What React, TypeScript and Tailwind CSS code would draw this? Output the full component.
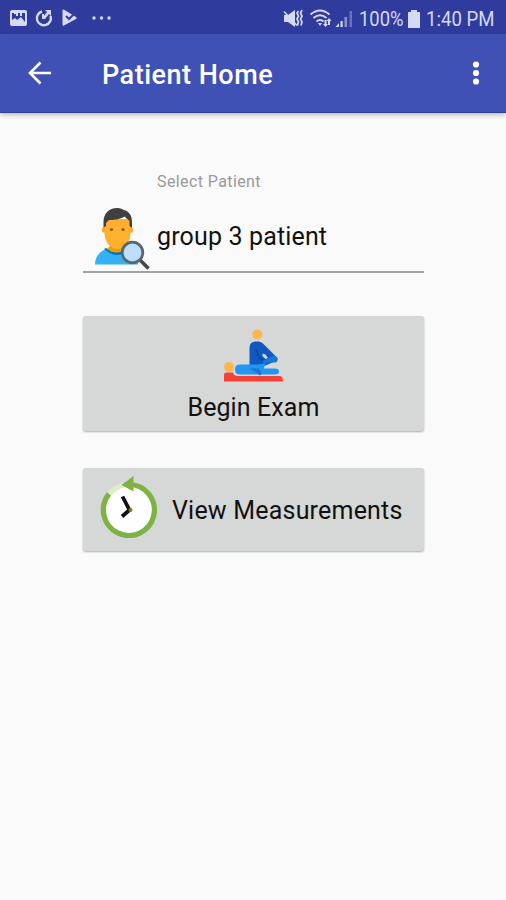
const StatusIcons = () => {
  return (
    <svg className="w-[112px] h-[34px]" viewBox="0 0 112 34" fill="#d5daf5">
      <path
        fillRule="evenodd"
        d="M12 10h13q2 0 2 2v12q0 2-2 2H12q-2 0-2-2V12q0-2 2-2zM12 13v7l3-2 2 2 4-3 4 5v-9h-3v3h-2v-3h-2v3h-2v-2h-2v-1z"
      />
      <path
        d="M42 11.5A7 7 0 1 0 50.5 16"
        fill="none"
        stroke="#d5daf5"
        strokeWidth="2.4"
      />
      <path d="M45 10h6v6l-2-2-4 5h-3v-5h2v2l3-4z" />
      <path d="M62.500 10.500q0-1.500 1.500-.8L76 17q1.500 1 0 2l-12 6.500q-1.500.7-1.500-.8z" />
      <path
        d="M66 16l3 3 6-6"
        fill="none"
        stroke="#303f9f"
        strokeWidth="2"
      />
      <circle cx="94" cy="18" r="1.700" />
      <circle cx="101.500" cy="18" r="1.700" />
      <circle cx="109" cy="18" r="1.700" />
    </svg>
  );
};

const SignalIcons = () => {
  return (
    <svg className="w-[72px] h-[34px]" viewBox="282 0 72 34" fill="#d5daf5">
      <path d="M284 15h4l7-5v17l-7-5h-4z" />
      <path
        d="M284 11.500l13 14"
        fill="none"
        stroke="#d5daf5"
        strokeWidth="1.600"
      />
      <path
        d="M298.500 11l-1.500 2 1.500 3-1.500 3 1.500 3-1 3.500M302 10l-1.500 3 1.500 3-1.500 3 1.500 3-1 3.500"
        fill="none"
        stroke="#d5daf5"
        strokeWidth="1.700"
      />
      <g fill="none" stroke="#d5daf5" strokeWidth="1.900">
        <path d="M310.500 14.500q9.500-8 19 0" />
        <path d="M313.500 18q6.500-5.500 13 0" />
        <path d="M316.500 21.500q3.500-3 7 0" />
      </g>
      <path d="M318 23h4l-2 3zM324.500 20h2v4h1.500l-2.500 3-2.500-3h1.500zM329 18l2.500 3H330v4h-2v-4h-1.500z" />
      <path d="M335.500 27l3.500-4v4z" />
      <path d="M340.500 21h2.200v6h-2.200z" />
      <path d="M344.500 17h2.500v10h-2.500z" opacity=".55" />
      <path d="M349.500 11h2.500v16h-2.500z" opacity=".35" />
    </svg>
  );
};

const StatusBar = () => {
  return (
    <div className="h-[34px] bg-[#303c9d] flex items-center justify-between text-[#d5daf5] text-[20px] leading-[34px] whitespace-nowrap">
      <StatusIcons />
      <div className="flex items-center pt-[3px] pr-[11px]">
        <div className="-mt-[3px] mr-[5px]">
          <SignalIcons />
        </div>
        <span className="w-[45px] origin-left scale-x-[.92]">100%</span>
        <svg
          className="w-[12px] h-[18px] ml-[4px] mr-[6px]"
          viewBox="0 0 12 18"
          fill="#d5daf5"
        >
          <path d="M3 0h6v2h3v16H0V2h3z" />
        </svg>
        <span className="w-[69px] origin-left scale-x-[.93]">1:40 PM</span>
      </div>
    </div>
  );
};

const Toolbar = () => {
  return (
    <header className="h-[79px] bg-[#3f51b5] border-b border-[#2f3f9c] shadow-[0_2px_5px_rgba(0,0,0,0.25)] flex items-center text-white">
      <button className="ml-[28px]" aria-label="Back">
        <svg
          className="w-[24px] h-[24px]"
          viewBox="0 0 24 24"
          fill="none"
          stroke="white"
          strokeWidth="2.600"
        >
          <path d="M23 12H3M12.500 1.500L2 12l10.500 10.500" />
        </svg>
      </button>
      <h1 className="ml-[50px] pt-[5px] text-[27px] font-medium tracking-[.5px] whitespace-nowrap">
        Patient Home
      </h1>
      <button className="ml-auto mr-[26px]" aria-label="More">
        <svg className="w-[8px] h-[26px]" viewBox="0 0 8 26" fill="white">
          <circle cx="4" cy="4.500" r="3.100" />
          <circle cx="4" cy="13" r="3.100" />
          <circle cx="4" cy="21.500" r="3.100" />
        </svg>
      </button>
    </header>
  );
};

const PatientIcon = () => {
  return (
    <svg className="w-[56px] h-[64px]" viewBox="94 206 56 64">
      <path d="M95 263.500c0-8 5-14 13-16h18c8 2 12 8 12 16z" fill="#35b0f2" />
      <path d="M107 248l4-4h13l3 4q-8 9-20 0z" fill="#ff9800" />
      <path d="M106 247q10 9 21 0l2 1q-11 12-25 0z" fill="#0277bd" />
      <circle cx="104.500" cy="229" r="2.700" fill="#ffa726" />
      <circle cx="130.500" cy="229" r="2.700" fill="#ffa726" />
      <path
        d="M104.500 218h26v14c0 8-5 16-13 16s-13-8-13-16z"
        fill="#ffb02e"
      />
      <path
        d="M103.500 227v-6c0-8 5-14 14-14 3 0 5 1 6 2 6 1 8.500 6 8.500 12v6l-2.500-2v-5l-5-4.500c-6 3.500-12 3.500-15.500 3.500l-3 3v3z"
        fill="#40403f"
      />
      <circle cx="111.500" cy="228.500" r="1.600" fill="#8a5a20" />
      <circle cx="123" cy="228.500" r="1.600" fill="#8a5a20" />
      <path d="M140 259l8.500 8.500" stroke="#41474b" strokeWidth="3.600" />
      <circle
        cx="132.500"
        cy="251.500"
        r="10.300"
        fill="#bbdefb"
        stroke="#5a666d"
        strokeWidth="2.800"
      />
    </svg>
  );
};

const ExamIcon = () => {
  return (
    <svg className="w-[62px] h-[54px]" viewBox="223 328 62 54">
      <circle cx="257.300" cy="334.500" r="5" fill="#ffb74d" />
      <circle cx="229" cy="367" r="5" fill="#ffb74d" />
      <path
        d="M224 375q0-2.500 2.500-2.500h6q2 3.500 5 3.500h42q3.500 0 3.500 5.500h-59z"
        fill="#f44336"
      />
      <path
        d="M249.500 366v-18q0-6.500 6-6.500h3q3 0 5 2.500l13 13q2 3-1 4l-11 5z"
        fill="#1159c0"
      />
      <path
        d="M256 349l3 9 6 3"
        fill="none"
        stroke="#0b46a0"
        strokeWidth="1.500"
      />
      <path d="M262.500 353.500l3 1 2.500 3.500-2.500 1-3-3z" fill="#d6d8d7" />
      <path d="M263 360.500l11-5 3.500 2q1 5-3 5h-7l-4 4z" fill="#1976d2" />
      <path
        d="M241 364.500h17l7-1-1 5h11q4 0 4 3t-4 3h-35q-5 0-5-5t5-5z"
        fill="#2196f3"
      />
      <path d="M250 368.500h9l3 5-2 2z" fill="#1875d6" />
    </svg>
  );
};

const HistoryIcon = () => {
  return (
    <svg className="w-[58px] h-[62px]" viewBox="99 475 58 62">
      <circle cx="128.500" cy="509" r="24" fill="white" />
      <path
        d="M108.500 493a25.500 25.500 0 0 1 14-9"
        fill="none"
        stroke="#dcedc8"
        strokeWidth="5"
      />
      <path
        d="M128 483.500A25.500 25.500 0 1 1 108 493"
        fill="none"
        stroke="#7cb342"
        strokeWidth="5.200"
      />
      <path d="M120.500 484L132.500 475v15.500z" fill="#7cb342" />
      <path
        d="M121.500 495.500l7 13.500-7.500 6.500"
        fill="none"
        stroke="#111"
        strokeWidth="3.800"
      />
      <circle cx="129.500" cy="509" r="2" fill="#827717" />
    </svg>
  );
};

const PatientSelect = () => {
  return (
    <div className="h-[107px] border-b-2 border-[#a2a2a2] pl-[11px] flex items-end">
      <PatientIcon />
      <div className="ml-[7px] pb-[18px] whitespace-nowrap">
        <div className="text-[16px] leading-5 text-[#999] tracking-[.4px] mb-[29px]">
          Select Patient
        </div>
        <div className="text-[25px] leading-[32px] text-[#111] tracking-[.15px]">
          group 3 patient
        </div>
      </div>
    </div>
  );
};

export default function App() {
  return (
    <div className="w-[506px] h-[900px] bg-[#fafafa] overflow-hidden font-[Roboto,sans-serif]">
      <StatusBar />
      <Toolbar />
      <main className="w-[341px] ml-[83px] pt-[53px]">
        <PatientSelect />
        <button className="mt-[43px] w-full h-[115px] rounded-[3px] bg-[#d6d8d7] shadow-[0_1px_2px_rgba(0,0,0,0.3)] flex flex-col items-center pt-[12px] text-[25px] leading-[32px] text-[#111]">
          <ExamIcon />
          <span className="mt-[10px] tracking-[.1px]">Begin Exam</span>
        </button>
        <button className="mt-[37px] w-full h-[83px] rounded-[3px] bg-[#d6d8d7] shadow-[0_1px_2px_rgba(0,0,0,0.3)] flex items-center pl-[17px] text-[25px] leading-[32px] text-[#111] whitespace-nowrap">
          <div className="pb-[5px]">
            <HistoryIcon />
          </div>
          <span className="ml-[14px] pt-[2px] tracking-[.2px]">
            View Measurements
          </span>
        </button>
      </main>
    </div>
  );
}
